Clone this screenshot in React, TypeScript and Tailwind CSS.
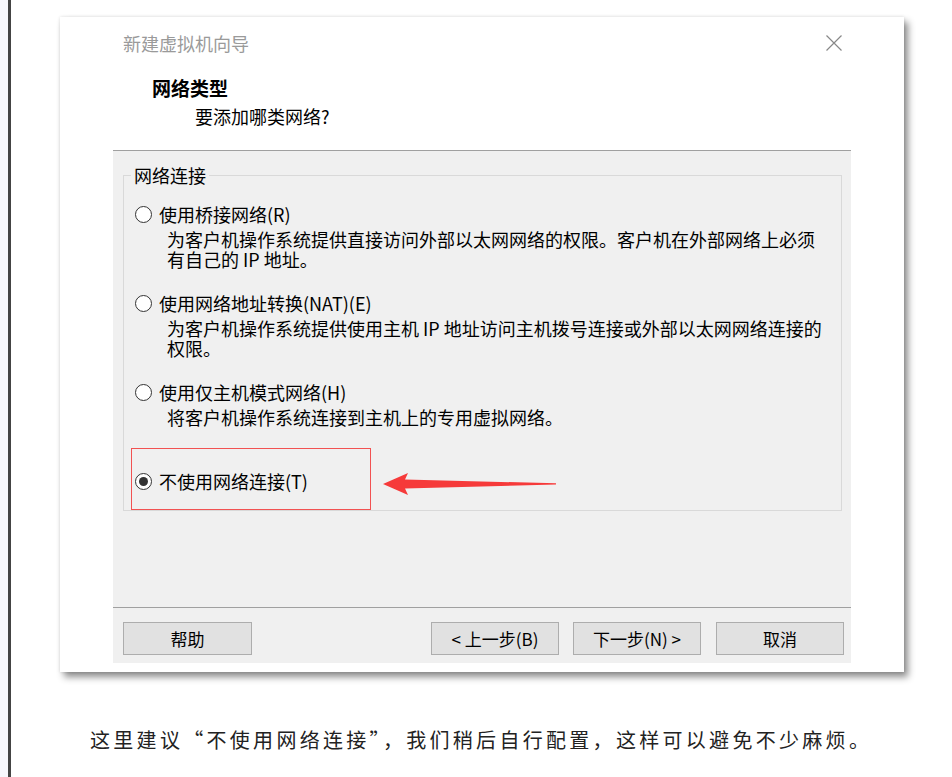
const font = { fontFamily: '"Noto Sans CJK SC", "Noto Sans", sans-serif' };

type Opt = { label: string; desc?: string[]; checked?: boolean };

const options: Opt[] = [
  {
    label: "使用桥接网络(R)",
    desc: ["为客户机操作系统提供直接访问外部以太网网络的权限。客户机在外部网络上必须", "有自己的 IP 地址。"],
  },
  {
    label: "使用网络地址转换(NAT)(E)",
    desc: ["为客户机操作系统提供使用主机 IP 地址访问主机拨号连接或外部以太网网络连接的", "权限。"],
  },
  {
    label: "使用仅主机模式网络(H)",
    desc: ["将客户机操作系统连接到主机上的专用虚拟网络。"],
  },
  { label: "不使用网络连接(T)", checked: true },
];

const Radio = ({ checked }: { checked?: boolean }) => (
  <span className="w-[17px] h-[17px] rounded-full border border-[#333] bg-white flex items-center justify-center shrink-0">
    {checked && <span className="w-[9px] h-[9px] rounded-full bg-[#333]" />}
  </span>
);

const Option = ({ opt, className }: { opt: Opt; className: string }) => (
  <div className={className}>
    <div className="flex items-center h-[20px]">
      <Radio checked={opt.checked} />
      <span className="ml-[7px]">{opt.label}</span>
    </div>
    {opt.desc && (
      <div className="mt-[5px] pl-[32px]">
        {opt.desc.map((l) => (
          <div key={l} className="h-[20px] whitespace-nowrap">
            {l}
          </div>
        ))}
      </div>
    )}
  </div>
);

const Button = ({ children, className = "" }: { children: string; className?: string }) => (
  <div
    className={`h-[33px] w-[128px] bg-[#e1e1e1] border border-[#adadad] flex items-center justify-center text-[17px] text-black ${className}`}
  >
    {children}
  </div>
);

export default function App() {
  return (
    <div className="h-[777px] flex bg-white text-black" style={font}>
      <div className="w-[8px] bg-[#f7f7fc]" />
      <div className="w-[3px] bg-[#444]" />
      <div className="flex-1 pl-[49px]">
        <div className="mt-[17px] w-[844px] bg-white px-[53px] pb-[9px] shadow-[0_0_3px_rgba(0,0,0,0.12),4px_5px_7px_rgba(0,0,0,0.45)]">
          {/* header */}
          <div className="h-[134px] border-b border-[#a0a0a0]">
            <div className="h-[52px] flex items-center justify-between pl-[10px] pr-[9px]">
              <span className="text-[18px] text-[#9a9a9a]">新建虚拟机向导</span>
              <svg width="16" height="16" viewBox="0 0 16 16">
                <path d="M0.5 0.5 L15.5 15.5 M15.5 0.5 L0.5 15.5" stroke="#888" strokeWidth="1.2" fill="none" />
              </svg>
            </div>
            <div className="mt-[9px] pl-[39px] text-[19px] leading-[20px] font-bold">网络类型</div>
            <div className="mt-[8px] pl-[82px] text-[18px] leading-[20px]">要添加哪类网络?</div>
          </div>

          {/* body */}
          <div className="relative h-[512px] bg-[#f0f0f0] flex flex-col text-[18px] leading-[20px]">
            <div className="pt-[13px] pl-[10px] pr-[9px]">
              <fieldset className="border border-[#d9d9d9] pl-[11px] pt-[18px] pb-[19px]">
                <legend className="ml-[-4px] px-[3px] leading-[22px]">网络连接</legend>
                {options.map((o, i) => (
                  <Option key={o.label} opt={o} className={i === 0 ? "" : i === 3 ? "mt-[44px]" : "mt-[24px]"} />
                ))}
              </fieldset>
            </div>

            <div className="mt-auto h-[56px] border-t border-[#a0a0a0] pt-[14px] pl-[10px] pr-[7px] flex">
              <Button className="w-[129px]">帮助</Button>
              <Button className="ml-auto">&lt; 上一步(B)</Button>
              <Button className="ml-[14px]">下一步(N) &gt;</Button>
              <Button className="ml-[15px]">取消</Button>
            </div>

            {/* annotation */}
            <div className="absolute left-[18px] top-[297px] w-[240px] h-[62px] border-[1.5px] border-[#f25252]" />
            <svg className="absolute left-[270px] top-[321px]" width="175" height="24" viewBox="0 0 175 24">
              <polygon points="0,12 25,1 22,7.5 173,11.3 173,12.5 22,16.5 25,23" fill="#f63a3a" />
            </svg>
          </div>
        </div>

        <p className="mt-[54px] pl-[30px] text-[20px] leading-[28px] tracking-[3.3px] text-[#222] whitespace-nowrap">
          这里建议“不使用网络连接”，我们稍后自行配置，这样可以避免不少麻烦。
        </p>
      </div>
    </div>
  );
}
